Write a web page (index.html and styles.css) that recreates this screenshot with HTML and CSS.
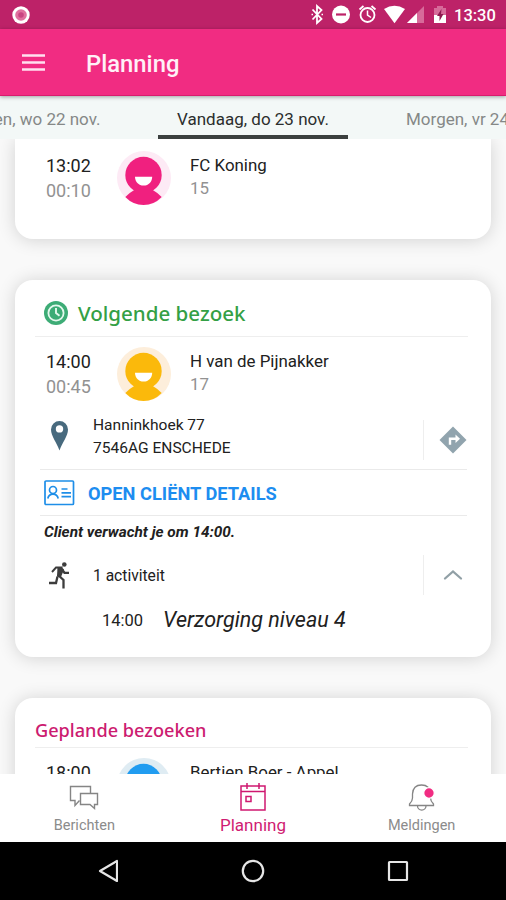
FILE: index.html
```html
<!DOCTYPE html>
<html lang="nl">
<head>
<meta charset="utf-8">
<title>Planning</title>
<link rel="stylesheet" href="styles.css">
</head>
<body>
<svg class="defs" width="0" height="0" aria-hidden="true">
  <symbol id="person" viewBox="0 0 54 54" overflow="visible">
    <circle class="halo" cx="27" cy="27" r="27"/>
    <ellipse cx="26.500" cy="24" rx="18.200" ry="18.200" fill="currentColor"/>
    <path d="M8.300 46Q12 42 18 38.500H35Q41 42 44.700 46 37 54 26.500 54T8.300 46z" fill="currentColor"/>
    <path d="M18 25.800h17.200c0 5-3.500 8.800-8.600 8.800S18 30.800 18 25.800z" fill="#fff"/>
  </symbol>
</svg>
<div class="status">
  <svg class="rec" viewBox="0 0 18 18"><circle cx="9" cy="9" r="8.700" fill="#fff"/><circle cx="9" cy="9" r="5.800" fill="#e0709f"/><circle cx="9" cy="9" r="2.800" fill="#c94482"/></svg>
  <svg class="status-icons" viewBox="0 0 142 29" fill="none" stroke="#fff">
    <path d="M1.500 9.500l9 9.500-4.500 4V6l4.500 4-9 9.500" stroke-width="1.800"/>
    <path d="M.500 14.500h1.500M10.500 14.500H12" stroke-width="1.600"/>
    <circle cx="30" cy="14.500" r="9" fill="#fff" stroke="none"/><path d="M25 14.500h10" stroke="#bd2268" stroke-width="2.200"/>
    <circle cx="56.500" cy="15" r="7" stroke-width="1.800"/><path d="M56.500 10.500V15l3.500 2.500" stroke-width="1.500"/><path d="M48.500 9.500l4-3.500M60.500 6l4 3.500" stroke-width="1.800"/>
    <path d="M73 9Q83.500 2.500 94 9L83.500 23.300z" fill="#fff" stroke="none"/>
    <path d="M96 23L113 6v17z" fill="#d76a9a" stroke="none"/><path d="M96 23l10-10v10z" fill="#fff" stroke="none"/>
    <path d="M123 8h3V6h6v2h3v7h-12z" fill="#d76a9a" stroke="none"/><path d="M123 15h12v8h-12z" fill="#fff" stroke="none"/><path d="M130.500 9l-4.500 7h2.500v5l4-7H130z" fill="#8f1850" stroke="none"/>
  </svg>
  <span class="clock">13:30</span>
</div>
<header class="appbar">
  <svg class="burger" viewBox="0 0 23 17"><path d="M0 1.500h23M0 8.500h23M0 15.500h23" stroke="#ffe0ef" stroke-width="2.400"/></svg>
  <h1>Planning</h1>
</header>
<nav class="days">
  <span class="day prev">Gisteren, wo 22 nov.</span>
  <span class="day today">Vandaag, do 23 nov.</span>
  <span class="day next">Morgen, vr 24 nov.</span>
</nav>
<main>
  <section class="card first">
    <div class="visit pink">
      <div class="times"><b>13:02</b><span>00:10</span></div>
      <svg class="avatar"><use href="#person"/></svg>
      <div class="who"><b>FC Koning</b><span>15</span></div>
    </div>
  </section>
  <section class="card second">
    <h2 class="green">
      <svg viewBox="0 0 24 24" width="24" height="24"><circle cx="12" cy="12" r="12" fill="#3dac76"/><circle cx="12" cy="12" r="7.600" fill="none" stroke="#e4f8ed" stroke-width="1.800"/><path d="M12 7v5l3.500 2.800" fill="none" stroke="#e4f8ed" stroke-width="1.900"/></svg>
      <span>Volgende bezoek</span>
    </h2>
    <div class="visit yellow">
      <div class="times"><b>14:00</b><span>00:45</span></div>
      <svg class="avatar"><use href="#person"/></svg>
      <div class="who"><b>H van de Pijnakker</b><span>17</span></div>
    </div>
    <div class="address">
      <svg class="pin" viewBox="0 0 17 30"><path d="M8.500 0A8.500 8.500 0 0 0 0 8.500C0 15 6 22 8.500 29.500 11 22 17 15 17 8.500A8.500 8.500 0 0 0 8.500 0z" fill="#486a7e"/><circle cx="8.500" cy="7.900" r="3.700" fill="#fff"/></svg>
      <p>Hanninkhoek 77<br>7546AG ENSCHEDE</p>
      <div class="side"><svg width="28" height="28" viewBox="0 0 28 28"><path d="M14 .500L27.500 14 14 27.500.500 14z" fill="#91a4ae"/><path d="M11 18.800v-6h7" fill="none" stroke="#fff" stroke-width="2.400"/><path d="M16.500 8.500l4.500 4.200-4.500 4.200z" fill="#fff"/></svg></div>
    </div>
    <div class="open">
      <svg width="31" height="26" viewBox="0 0 31 26" fill="none" stroke="#1e8ee8" stroke-width="1.700"><rect x="1" y="1" width="28.500" height="23.500" rx="1"/><circle cx="9" cy="10" r="3.500"/><path d="M3.800 18.500q1-4.300 5.200-4.300t5.200 4.300M17.500 9h6M17.500 12.800h9.500M17.500 16.600h9.500"/></svg>
      <a>OPEN CLIËNT DETAILS</a>
    </div>
    <p class="note">Client verwacht je om 14:00.</p>
    <div class="activity">
      <svg class="runner" viewBox="0 0 20 27" fill="none" stroke="#3d3d3d"><circle cx="15.300" cy="2.500" r="2.300" fill="#3d3d3d" stroke="none"/><path d="M3 10l4-4.500h5.500l-3.500 9" stroke-width="1.900"/><path d="M8.500 5h4l2.500 2.500-3 7.500-4-.500z" fill="#3d3d3d" stroke="none"/><path d="M13 7.500l2.500 3.300h4.500M9 13l5.500 5v8.500M8.500 14.500l-1.500 6.500H0" stroke-width="2.300"/></svg>
      <span class="count">1 activiteit</span>
      <div class="side"><svg width="20" height="12" viewBox="0 0 20 12"><path d="M2 9.500L10 2.500l8 7" fill="none" stroke="#91a0a6" stroke-width="2.300" stroke-linecap="round"/></svg></div>
    </div>
    <div class="task"><span>14:00</span><em>Verzorging niveau 4</em></div>
  </section>
  <section class="card third">
    <h2 class="magenta"><span>Geplande bezoeken</span></h2>
    <div class="visit blue">
      <div class="times"><b>18:00</b></div>
      <svg class="avatar"><use href="#person"/></svg>
      <div class="who"><b>Bertien Boer - Appel</b></div>
    </div>
  </section>
</main>
<nav class="bottom">
  <div class="item"><svg width="30" height="30" viewBox="0 0 30 30" fill="none" stroke="#858585" stroke-width="1.400"><path d="M10.500 18.500L6 23.500v-5H1.500V4.500h20v6.500"/><path d="M11.500 11.500h17v11h-3v4l-4.500-4h-9.500z"/></svg><span>Berichten</span></div>
  <div class="item active"><svg width="28" height="30" viewBox="0 0 28 30" fill="none" stroke="#cf1870" stroke-width="1.500"><path d="M2 4h24v24H2zM2 9.500h24M8 1v6M20 1v6M7 14.500h5v5H7z"/></svg><span>Planning</span></div>
  <div class="item"><svg width="28" height="30" viewBox="0 0 28 30" fill="none" stroke="#858585" stroke-width="1.300"><path d="M1.500 23.500v-1.500q3-3 3-6v-4Q5 3 13.500 3t9 9v4q0 3 3 6v1.500zM9.500 24a4.200 4 0 0 0 8.500 0"/><circle cx="21" cy="11" r="5.300" fill="#f12c82" stroke="#fff" stroke-width="1.300"/></svg><span>Meldingen</span></div>
</nav>
<footer class="system">
  <svg width="20" height="24" viewBox="0 0 20 24"><path d="M19 2v20L2 12z"/></svg>
  <svg width="24" height="24" viewBox="0 0 24 24"><circle cx="12" cy="12" r="10.200"/></svg>
  <svg width="22" height="24" viewBox="0 0 22 24"><rect x="2" y="3" width="18" height="18" rx=".500"/></svg>
</footer>
</body>
</html>
```
FILE: styles.css
```css
* { box-sizing: border-box; }
body {
  margin: 0;
  width: 506px;
  height: 900px;
  display: flex;
  flex-direction: column;
  overflow: hidden;
  background: #f9f9f9;
  color: #212121;
  font-family: Roboto, "Liberation Sans", sans-serif;
  white-space: nowrap;
}
h1, h2, p { margin: 0; font-weight: 400; }
svg { display: block; flex: none; }
.defs { position: absolute; }

.status {
  height: 29px;
  flex: none;
  display: flex;
  align-items: center;
  background: #bd2268;
  color: #fff;
  padding-left: 12px;
}
.rec { width: 18px; height: 18px; }
.status-icons { width: 142px; height: 29px; margin-left: 281px; }
.clock { font-size: 16.500px; font-weight: 500; margin-left: 1px; line-height: 29px; padding-top: 2px; }

.appbar {
  height: 67px;
  flex: none;
  display: flex;
  align-items: center;
  background: #f12c82;
  border-bottom: 1px solid #d81c6e;
  box-shadow: 0 1px 4px rgba(0, 0, 0, .35);
  padding-left: 22px;
  z-index: 2;
}
.burger { width: 23px; height: 17px; }
.appbar h1 { margin-left: 41px; color: #fff0f7; font-size: 23.800px; font-weight: 500; padding-top: 3px; }

.days {
  width: 506px;
  height: 43px;
  flex: none;
  display: flex;
  overflow: hidden;
  background: #f3f8f7;
  font-size: 17px;
  line-height: 46px;
  color: #858887;
  z-index: 1;
}
.day { flex: none; }
.prev { width: 158px; display: flex; justify-content: flex-end; padding-right: 57.500px; }
.today { width: 190px; text-align: center; color: #2b2e2d; border-bottom: 4px solid #3b403f; height: 43px; }
.next { padding-left: 58px; }

main {
  flex: 1;
  min-height: 0;
  overflow: hidden;
  display: flex;
  flex-direction: column;
  gap: 41px;
  padding: 0 15px;
}
.card { flex: none; background: #fff; border-radius: 18px; box-shadow: 0 1px 18px rgba(0, 0, 0, .16); }
.first { height: 100px; border-radius: 0 0 18px 18px; padding-top: 2px; }
.second { height: 377px; }
.third { height: 200px; }

h2 { display: flex; align-items: center; margin: 0 23px 0 20px; border-bottom: 1px solid #eee; font-family: "Noto Sans", sans-serif; }
.green { height: 57px; padding: 9px 0 0 9px; gap: 10px; color: #34a045; font-size: 20.550px; font-weight: 500; }
.magenta { height: 50px; padding-top: 14px; color: #cc1b70; font-size: 18.150px; font-weight: 500; }

.visit { height: 73px; padding: 10px 0 0 31px; display: grid; grid-template-columns: 71px 73px 1fr; align-items: start; }
.avatar { width: 54px; height: 54px; overflow: visible; }
.visit b { display: block; font-weight: 400; }
.times { font-size: 18px; line-height: 25px; padding-top: 2px; }
.times span { display: block; color: #929292; }
.who { font-size: 16.900px; line-height: 23px; padding-top: 3px; }
.who > span { color: #929292; }
.pink .avatar { color: #f0207f; fill: #fdeaf5; }
.yellow .avatar { color: #fbb90b; fill: #fdeedb; }
.blue .avatar { color: #219cf0; fill: #dfecf3; }

.address { height: 60px; margin: 0 24px 0 25px; padding: 4px 0 0 11px; display: flex; border-bottom: 1px solid #eaeaea; }
.pin { width: 17px; height: 30px; margin-top: 7px; }
.address p { flex: none; margin-left: 25px; width: 330px; font-size: 15.550px; line-height: 23px; }
.side { flex: none; width: 58px; height: 40px; margin-top: 6px; border-left: 1px solid #eee; display: grid; place-items: center; }
.open { height: 46px; margin: 0 24px 0 25px; padding-left: 4px; display: flex; align-items: center; gap: 13px; border-bottom: 1px solid #eaeaea; color: #1d8df0; font-size: 18.250px; font-weight: 700; }
.open a { padding-top: 1px; }
.note { padding-left: 29px; height: 33px; line-height: 32px; font-size: 15.350px; font-weight: 700; font-style: italic; }
.activity { height: 52px; padding: 0 0 0 34px; display: flex; align-items: center; }
.runner { width: 20px; height: 27px; }
.activity .count { flex: none; margin-left: 24px; width: 330px; font-size: 15.600px; padding-top: 1px; }
.activity .side { margin-top: 0; }
.task { display: flex; align-items: center; gap: 20px; padding-left: 87px; line-height: 36px; font-size: 16.500px; }
.task em { font-size: 21.500px; }
.task span { padding-top: 2px; }

.bottom { height: 68px; flex: none; background: #fff; display: grid; grid-template-columns: repeat(3, 1fr); z-index: 1; }
.item { display: flex; flex-direction: column; align-items: center; color: #8b8b8b; font-size: 14.500px; line-height: 18px; padding-top: 8px; gap: 5px; }
.active { color: #d01b72; font-size: 17px; gap: 4px; }
.system { height: 58px; flex: none; background: #000; display: flex; align-items: center; padding-left: 98px; gap: 122.500px; }
.system svg { fill: none; stroke: #e6e6e6; stroke-width: 2.200; stroke-linejoin: round; }
```
